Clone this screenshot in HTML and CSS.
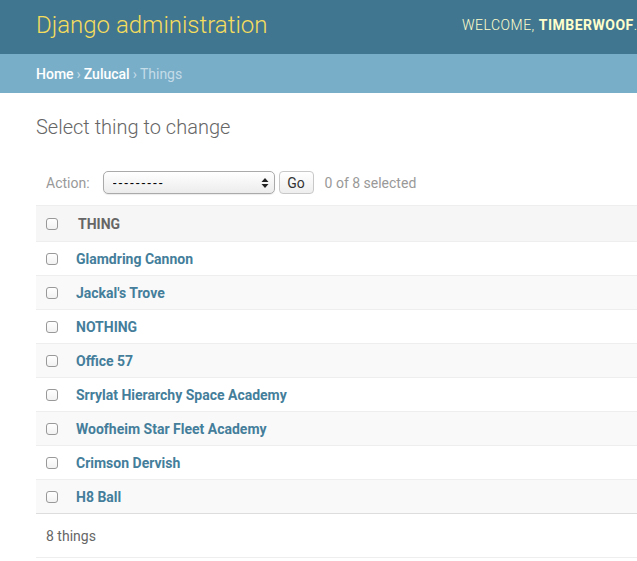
FILE: index.html
```html
<!DOCTYPE html>
<html>
<head>
<meta charset="utf-8">
<title>Select thing to change | Django site admin</title>
<link rel="stylesheet" href="styles.css">
</head>
<body>
<div class="container">
  <header class="header">
    <div class="branding">Django administration</div>
    <div class="user-tools">Welcome, <strong>timberwoof</strong>.</div>
  </header>
  <nav class="breadcrumbs">
    <a href="#">Home</a><span class="sep">›</span><a href="#">Zulucal</a><span class="sep">›</span><span class="current">Things</span>
  </nav>
  <main class="content">
    <h1 class="title">Select thing to change</h1>
    <div class="changelist">
      <div class="actions">
        <label class="action-label">Action:</label>
        <span class="select-wrap">
          <select class="action-select"><option>---------</option><option>Delete selected things</option></select>
          <svg class="select-arrows" width="8" height="12" viewBox="0 0 8 12"><path d="M4 1 L7.5 5 H0.5 Z M4 11 L7.5 7 H0.5 Z" fill="#222"/></svg>
        </span>
        <button class="go-btn" type="button">Go</button>
        <span class="counter">0 of 8 selected</span>
      </div>
      <table class="result-list">
        <thead>
          <tr><th class="check-col"><input type="checkbox" class="cb"></th><th class="name-col">Thing</th></tr>
        </thead>
        <tbody>
          <tr class="row1"><td class="check-col"><input type="checkbox" class="cb"></td><td class="name-col"><a href="#">Glamdring Cannon</a></td></tr>
          <tr class="row2"><td class="check-col"><input type="checkbox" class="cb"></td><td class="name-col"><a href="#">Jackal's Trove</a></td></tr>
          <tr class="row1"><td class="check-col"><input type="checkbox" class="cb"></td><td class="name-col"><a href="#">NOTHING</a></td></tr>
          <tr class="row2"><td class="check-col"><input type="checkbox" class="cb"></td><td class="name-col"><a href="#">Office 57</a></td></tr>
          <tr class="row1"><td class="check-col"><input type="checkbox" class="cb"></td><td class="name-col"><a href="#">Srrylat Hierarchy Space Academy</a></td></tr>
          <tr class="row2"><td class="check-col"><input type="checkbox" class="cb"></td><td class="name-col"><a href="#">Woofheim Star Fleet Academy</a></td></tr>
          <tr class="row1"><td class="check-col"><input type="checkbox" class="cb"></td><td class="name-col"><a href="#">Crimson Dervish</a></td></tr>
          <tr class="row2"><td class="check-col"><input type="checkbox" class="cb"></td><td class="name-col"><a href="#">H8 Ball</a></td></tr>
        </tbody>
      </table>
      <p class="paginator">8 things</p>
    </div>
  </main>
</div>
</body>
</html>
```
FILE: styles.css
```css
html, body {
  margin: 0;
  padding: 0;
  overflow: hidden;
  background: #fff;
}
body {
  font-family: Roboto, "Liberation Sans", sans-serif;
  font-size: 14px;
  color: #333;
}
.container {
  width: 1000px;
}
.header {
  box-sizing: border-box;
  height: 54px;
  background: #417690;
  display: flex;
  align-items: center;
  padding: 0 0 4px 36px;
  white-space: nowrap;
}
.branding {
  flex: 0 0 426px;
  font-size: 24px;
  font-weight: 300;
  color: #f5dd5d;
  line-height: 30px;
}
.user-tools {
  font-size: 14px;
  font-weight: 300;
  text-transform: uppercase;
  letter-spacing: 0.5px;
  color: #ffc;
  line-height: 30px;
}
.user-tools strong {
  font-weight: 700;
}
.breadcrumbs {
  background: #79aec8;
  padding: 11px 36px 9px;
  line-height: 19px;
  font-size: 14px;
  color: #c4dce8;
}
.breadcrumbs a {
  color: #fff;
  text-decoration: none;
  font-weight: 500;
}
.breadcrumbs .sep {
  margin: 0 3px;
  color: #c4dce8;
}
.breadcrumbs .current {
  color: #c4dce8;
}
.content {
  padding: 22px 36px 0;
}
.title {
  margin: 0 0 21px;
  font-size: 20px;
  line-height: 24px;
  font-weight: 300;
  color: #666;
}
.actions {
  display: flex;
  align-items: center;
  padding: 11px 10px;
  color: #999;
  font-size: 14px;
}
.action-label {
  margin-right: 13px;
}
.select-wrap {
  position: relative;
  display: inline-flex;
}
.action-select {
  appearance: none;
  -webkit-appearance: none;
  box-sizing: border-box;
  width: 172px;
  height: 23px;
  border: 1px solid #aaa;
  border-radius: 5px;
  background: linear-gradient(#fff, #ececec);
  font-family: "Liberation Sans", Roboto, sans-serif;
  font-size: 13px;
  letter-spacing: 1.4px;
  color: #000;
  padding: 0 0 0 9px;
  box-shadow: 0 1px 1px rgba(0,0,0,0.08);
}
.select-arrows {
  position: absolute;
  right: 6px;
  top: 6px;
}
.go-btn {
  box-sizing: border-box;
  margin-left: 4px;
  width: 35px;
  height: 23px;
  border: 1px solid #c8c8c8;
  border-radius: 4px;
  background: linear-gradient(#fff, #eee);
  font-family: Roboto, "Liberation Sans", sans-serif;
  font-size: 14px;
  color: #333;
  padding: 0;
}
.counter {
  margin-left: 11px;
}
.result-list {
  width: 100%;
  border-collapse: collapse;
}
.result-list thead th {
  background: #f6f6f6;
  border-top: 1px solid #eee;
  border-bottom: 1px solid #eee;
  height: 35px;
  padding: 0;
  text-align: left;
  font-size: 14px;
  font-weight: 700;
  text-transform: uppercase;
  color: #666;
  vertical-align: middle;
}
.result-list td {
  height: 33px;
  padding: 0;
  border-bottom: 1px solid #eee;
  vertical-align: middle;
}
.result-list tbody tr:last-child td {
  border-bottom: 1px solid #ddd;
}
.row2 td {
  background: #f9f9f9;
}
.check-col {
  width: 30px;
  padding-left: 10px !important;
}
th.name-col {
  padding-left: 2px !important;
}
td.name-col a {
  color: #447e9b;
  font-weight: 700;
  text-decoration: none;
  font-size: 14px;
}
.cb {
  appearance: none;
  -webkit-appearance: none;
  display: block;
  margin: 1px 0 0;
  width: 12px;
  height: 12px;
  border: 1px solid #999;
  border-radius: 3px;
  background: linear-gradient(#fff, #f2f2f2);
}
.paginator {
  margin: 0;
  padding: 11px 10px 10px;
  line-height: 22px;
  font-size: 14px;
  color: #666;
  border-bottom: 1px solid #eee;
}
```
